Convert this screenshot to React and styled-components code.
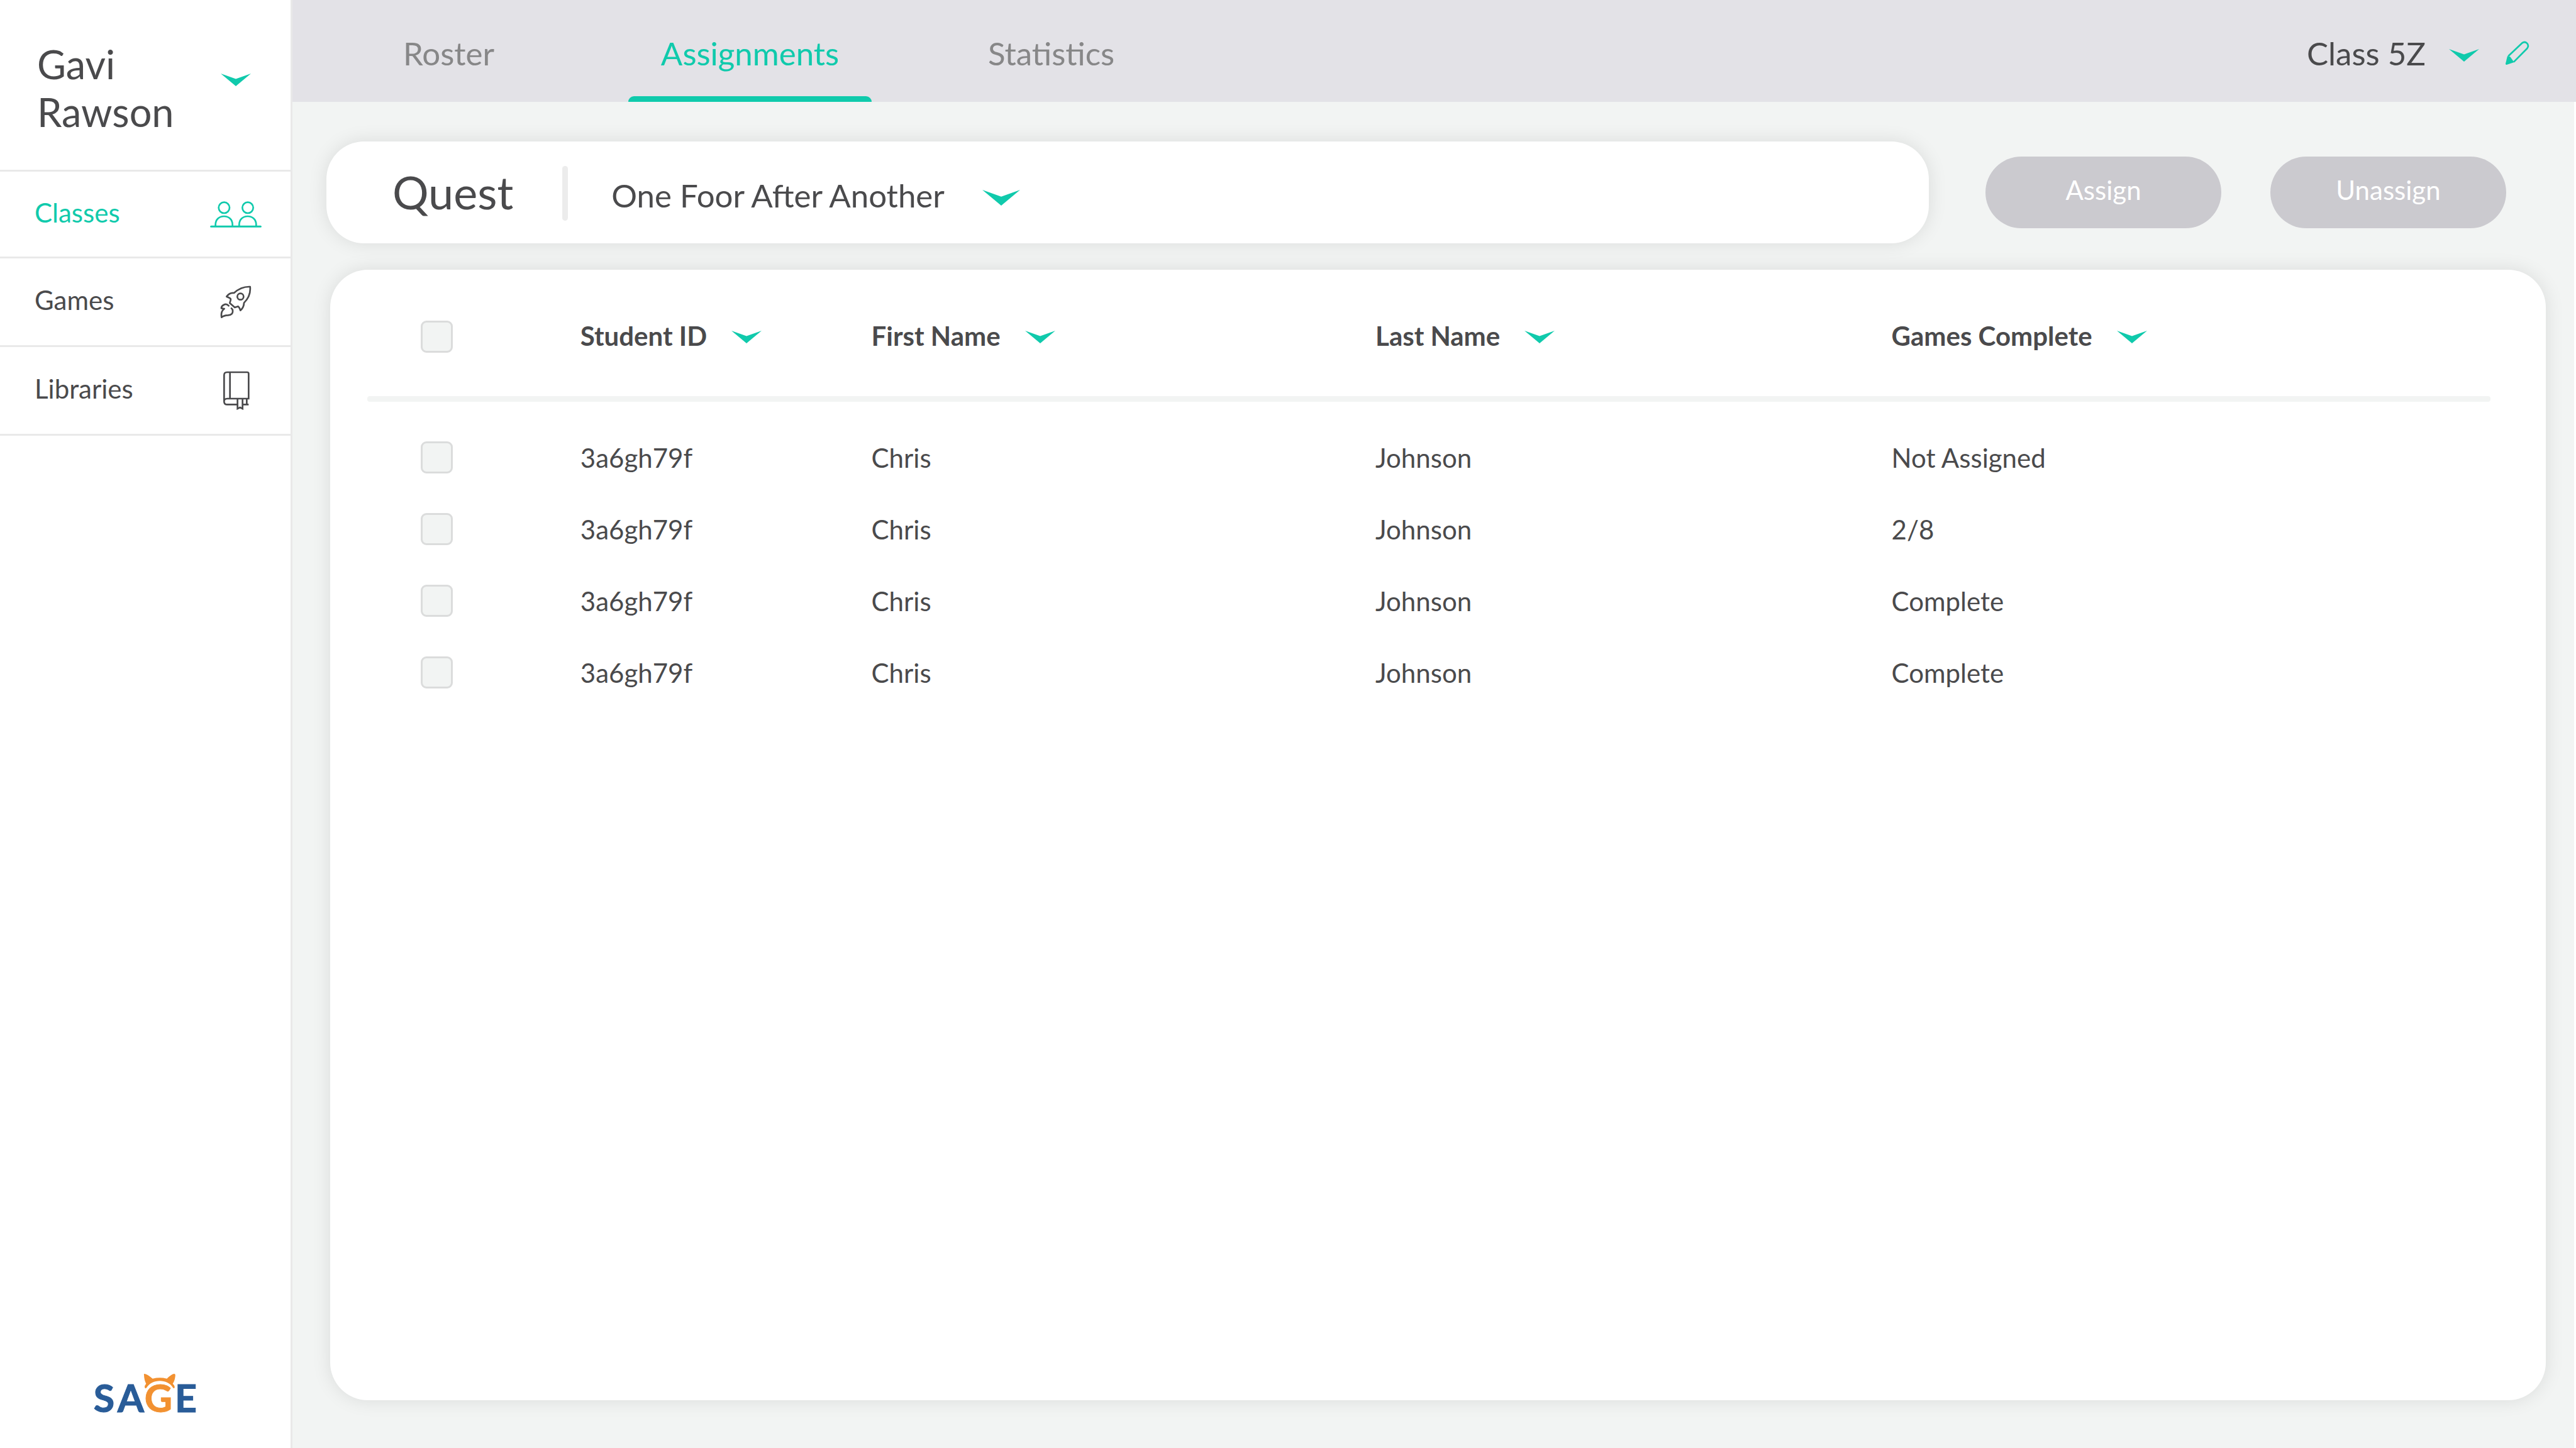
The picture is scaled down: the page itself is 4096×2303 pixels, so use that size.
import React, { useState } from "react";
import styled, { createGlobalStyle, css } from "styled-components";

const color = {
  teal: "#10caac",
  text: "#4a4a4c",
  muted: "#878788",
  line: "#e9e9e9",
  header: "#e3e2e7",
  canvas: "#f2f4f3",
  button: "#cbcacf",
  blue: "#295c98",
  orange: "#f29131",
};

const GlobalStyle = createGlobalStyle`
  *, *::before, *::after { box-sizing: border-box; }
  body {
    margin: 0;
    background: #fff;
    color: ${color.text};
    font-family: Lato, "Open Sans", sans-serif;
    font-size: 42px;
  }
  button, select, input {
    margin: 0;
    padding: 0;
    border: 0;
    background: none;
    color: inherit;
    font: inherit;
  }
  button, select { cursor: pointer; }
`;

const Shell = styled.div`
  display: flex;
  min-height: 100vh;
`;

/* Sidebar */

const Sidebar = styled.aside`
  display: flex;
  flex: none;
  flex-direction: column;
  width: 465px;
  border-right: 3px solid ${color.line};
  background: #fff;
`;

const Account = styled.button`
  display: flex;
  align-items: flex-start;
  justify-content: space-between;
  padding: 64px 63px 54px 59px;
  border-bottom: 3px solid ${color.line};
  font-size: 63px;
  line-height: 76px;
  text-align: left;

  svg { margin-top: 53px; }
`;

const AccountName = styled.span`
  width: min-content;
`;

const NavLink = styled.a`
  display: flex;
  align-items: center;
  justify-content: space-between;
  height: ${(p) => (p.$active ? 138 : 141)}px;
  padding: 0 46px 0 55px;
  border-bottom: 3px solid ${color.line};
  color: ${(p) => (p.$active ? color.teal : color.text)};
  text-decoration: none;
`;

const NavLabel = styled.span`
  padding-bottom: 6px;
`;

const NavIcon = styled.span`
  display: flex;
  justify-content: center;
  width: 82px;
`;

const Brand = styled.div`
  display: flex;
  justify-content: center;
  margin-top: auto;
  padding-bottom: 53px;
`;

/* Top bar */

const Main = styled.main`
  display: flex;
  flex: 1;
  flex-direction: column;
  min-width: 0;
`;

const TopBar = styled.header`
  display: flex;
  justify-content: space-between;
  height: 162px;
  padding: 0 74px 0 55px;
  background: ${color.header};
  font-size: 51px;
`;

const Tabs = styled.nav`
  display: flex;
  gap: 92px;
`;

const Tab = styled.button`
  display: flex;
  flex-direction: column;
  align-items: center;
  justify-content: center;
  width: 387px;
  padding-top: 6px;
  color: ${(p) => (p.$active ? color.teal : color.muted)};

  ${(p) =>
    p.$active &&
    css`
      padding-top: 15px;
      &::after {
        content: "";
        width: 100%;
        height: 9px;
        border-radius: 9px 9px 0 0;
        background: ${color.teal};
      }
    `}
`;

const TabLabel = styled.span`
  display: flex;
  flex: 1;
  align-items: center;
`;

const ClassTools = styled.div`
  display: flex;
  align-items: center;
  gap: 41px;
  padding-top: 6px;
`;

const IconButton = styled.button`
  display: flex;
`;

const Picker = styled.span`
  display: grid;
  align-items: center;

  > * { grid-area: 1 / 1; }
  svg {
    justify-self: end;
    margin-top: 8px;
    pointer-events: none;
  }
`;

const Select = styled.select`
  appearance: none;
  padding-right: ${(p) => p.$room}px;
  font-size: 51px;
`;

/* Content */

const Content = styled.div`
  display: flex;
  flex: 1;
  flex-direction: column;
  gap: 42px;
  margin-right: 3px;
  padding: 63px 45px 76px 60px;
  background: ${color.canvas};
`;

const Toolbar = styled.div`
  display: flex;
  align-items: center;
  gap: 78px;
  margin: 0 63px 0 -6px;
`;

const QuestBar = styled.section`
  display: flex;
  flex: 1;
  align-items: center;
  height: 162px;
  margin-right: 12px;
  padding-left: 105px;
  border-radius: 60px;
  background: #fff;
  box-shadow: 0 0 30px rgba(0, 0, 0, 0.1);
`;

const QuestLabel = styled.label`
  padding-bottom: 2px;
  font-size: 72px;
`;

const Divider = styled.span`
  width: 9px;
  height: 87px;
  margin: 2px 69px 0 78px;
  border-radius: 5px;
  background: #ececec;
`;

const QuestPicker = styled(Picker)`
  padding-top: 8px;
`;

const PillButton = styled.button`
  width: 375px;
  height: 114px;
  padding-bottom: 9px;
  border-radius: 57px;
  background: ${color.button};
  color: #fff;
`;

const Card = styled.section`
  flex: 1;
  padding: 0 88px 60px 59px;
  border-radius: 60px;
  background: #fff;
  box-shadow: 0 0 30px rgba(0, 0, 0, 0.1);
`;

const Table = styled.table`
  display: block;
`;

const Head = styled.thead`
  display: block;

  &::after {
    content: "";
    display: block;
    height: 9px;
    border-radius: 4px;
    background: ${color.canvas};
  }
`;

const Body = styled.tbody`
  display: block;
  padding-top: 31px;
`;

const Row = styled.tr`
  display: grid;
  grid-template-columns: 254fr 463fr 802fr 821fr 953fr;
  align-items: center;
  height: ${(p) => (p.$head ? "auto" : "114px")};
  padding: ${(p) => (p.$head ? "81px 0 69px 85px" : "0 0 0 85px")};
`;

const HeadCell = styled.th`
  display: flex;
  padding: 0;
  font-weight: 700;
`;

const Cell = styled.td`
  display: flex;
  padding: ${(p) => (p.$text ? "2px 0 0" : "0")};
`;

const SortButton = styled.button`
  display: flex;
  align-items: center;
  gap: 39px;
  height: 51px;
  padding-bottom: 4px;

  svg { margin-top: 4px; }
`;

const Checkbox = styled.input`
  appearance: none;
  width: 51px;
  height: 51px;
  border: 3px solid #dbdcdc;
  border-radius: 9px;
  background: ${color.canvas};
  cursor: pointer;

  &:checked { background: ${color.teal}; }
`;

/* Drawings */

const Chevron = ({ width = 48, height = 20 }) => (
  <svg width={width} height={height} viewBox="0 0 48 20" preserveAspectRatio="none" aria-hidden="true">
    <path d="M0 0 24 8.6 48 0 24 20Z" fill={color.teal} />
  </svg>
);

const ClassesIcon = () => (
  <svg width="82" height="42" viewBox="0 0 246 126" fill="none" stroke="currentColor" strokeWidth="8" aria-hidden="true">
    <circle cx="67" cy="31" r="26" />
    <circle cx="180" cy="31" r="26" />
    <path d="M26 119V112C26 87 44 72 66.500 72S107 87 107 112V119" />
    <path d="M139 119V112C139 87 157 72 179.500 72S220 87 220 112V119" />
    <path d="M5 120.500H241" strokeWidth="9" strokeLinecap="round" />
  </svg>
);

const RocketIcon = () => (
  <svg width="50" height="52" viewBox="0 0 150 156" fill="none" stroke="currentColor" strokeWidth="8" strokeLinejoin="round" strokeLinecap="round" aria-hidden="true">
    <path d="M143 6C118 5 90 14 66 36Q46 33 31 53L44 59Q52 62 50 70L46 84 70 105 86 100Q91 103 97 119Q113 106 114 83C135 62 146 34 143 6Z" />
    <circle cx="97" cy="53" r="15" />
    <path d="M41 97Q31 86 18 92Q5 98 6 109L20 111Q2 124 7 152Q17 143 38 142Q62 140 60 121Q60 114 54 109" />
  </svg>
);

const BookIcon = () => (
  <svg width="43" height="62" viewBox="0 0 129 186" fill="none" stroke="currentColor" strokeWidth="8" aria-hidden="true">
    <path d="M7 146V20Q7 6 21 6H117Q124 6 124 13V132H22Q7 132 7 146Q7 160 22 160H71M95 160H124" />
    <path d="M35 6V132M115 132V160M71 134V180L83 174 95 180V134" />
  </svg>
);

const PencilIcon = () => (
  <svg width="39" height="39" viewBox="0 0 117 117" fill="none" stroke={color.teal} strokeWidth="8" strokeLinejoin="round" aria-hidden="true">
    <path d="M16 73 81 11Q94 1 105 11Q116 23 106 36L42 101" />
    <path d="M12 72 25 76 39 95 44 102 8 114Q3 115 3 109Z" fill={color.teal} stroke="none" />
  </svg>
);

const LogoLetter = styled.text`
  fill: ${(p) => (p.$accent ? color.orange : color.blue)};
  stroke: ${(p) => (p.$accent ? color.orange : color.blue)};
  stroke-width: 3px;
  font-family: Lato, sans-serif;
  font-size: 183px;
  font-weight: 700;
`;

const Logo = () => (
  <svg width="162" height="66" viewBox="0 0 486 198" overflow="visible" role="img" aria-label="SAGE">
    <LogoLetter x="-4" y="187">S</LogoLetter>
    <LogoLetter x="110" y="187">A</LogoLetter>
    <LogoLetter x="239" y="187" $accent>G</LogoLetter>
    <LogoLetter x="384" y="187">E</LogoLetter>
    <path
      d="M238 3Q252 4 278 26Q312 18 346 26Q366 6 380 3Q388 2 386 14Q384 36 374 50Q385 59 383 68Q380 76 375 69C350 26 274 26 249 70Q242 76 240 67Q239 60 247 50Q238 34 237 10Q236 3 238 3Z"
      fill={color.orange}
    />
  </svg>
);

/* Data */

const navItems = [
  { label: "Classes", Icon: ClassesIcon },
  { label: "Games", Icon: RocketIcon },
  { label: "Libraries", Icon: BookIcon },
];

const tabs = ["Roster", "Assignments", "Statistics"];

const columns = ["Student ID", "First Name", "Last Name", "Games Complete"];

const students = ["Not Assigned", "2/8", "Complete", "Complete"].map((games, i) => ({
  key: i,
  id: "3a6gh79f",
  first: "Chris",
  last: "Johnson",
  games,
}));

export default function App() {
  const [tab, setTab] = useState("Assignments");

  return (
    <>
      <GlobalStyle />
      <Shell>
        <Sidebar>
          <Account type="button">
            <AccountName>Gavi Rawson</AccountName>
            <Chevron />
          </Account>
          <nav>
            {navItems.map(({ label, Icon }) => (
              <NavLink key={label} href="#" $active={label === "Classes"}>
                <NavLabel>{label}</NavLabel>
                <NavIcon>
                  <Icon />
                </NavIcon>
              </NavLink>
            ))}
          </nav>
          <Brand>
            <Logo />
          </Brand>
        </Sidebar>

        <Main>
          <TopBar>
            <Tabs>
              {tabs.map((name) => (
                <Tab key={name} type="button" $active={name === tab} onClick={() => setTab(name)}>
                  <TabLabel>{name}</TabLabel>
                </Tab>
              ))}
            </Tabs>
            <ClassTools>
              <Picker>
                <Select aria-label="Class" $room={85}>
                  <option>Class 5Z</option>
                </Select>
                <Chevron />
              </Picker>
              <IconButton type="button" aria-label="Edit class">
                <PencilIcon />
              </IconButton>
            </ClassTools>
          </TopBar>

          <Content>
            <Toolbar>
              <QuestBar>
                <QuestLabel htmlFor="quest">Quest</QuestLabel>
                <Divider />
                <QuestPicker>
                  <Select id="quest" $room={114}>
                    <option>One Foor After Another</option>
                  </Select>
                  <Chevron width={60} height={25} />
                </QuestPicker>
              </QuestBar>
              <PillButton type="button">Assign</PillButton>
              <PillButton type="button">Unassign</PillButton>
            </Toolbar>

            <Card>
              <Table>
                <Head>
                  <Row $head>
                    <HeadCell>
                      <Checkbox type="checkbox" aria-label="Select all students" />
                    </HeadCell>
                    {columns.map((name) => (
                      <HeadCell key={name} scope="col">
                        <SortButton type="button">
                          {name}
                          <Chevron />
                        </SortButton>
                      </HeadCell>
                    ))}
                  </Row>
                </Head>
                <Body>
                  {students.map((s) => (
                    <Row key={s.key}>
                      <Cell>
                        <Checkbox type="checkbox" aria-label={`Select ${s.first} ${s.last}`} />
                      </Cell>
                      <Cell $text>{s.id}</Cell>
                      <Cell $text>{s.first}</Cell>
                      <Cell $text>{s.last}</Cell>
                      <Cell $text>{s.games}</Cell>
                    </Row>
                  ))}
                </Body>
              </Table>
            </Card>
          </Content>
        </Main>
      </Shell>
    </>
  );
}
